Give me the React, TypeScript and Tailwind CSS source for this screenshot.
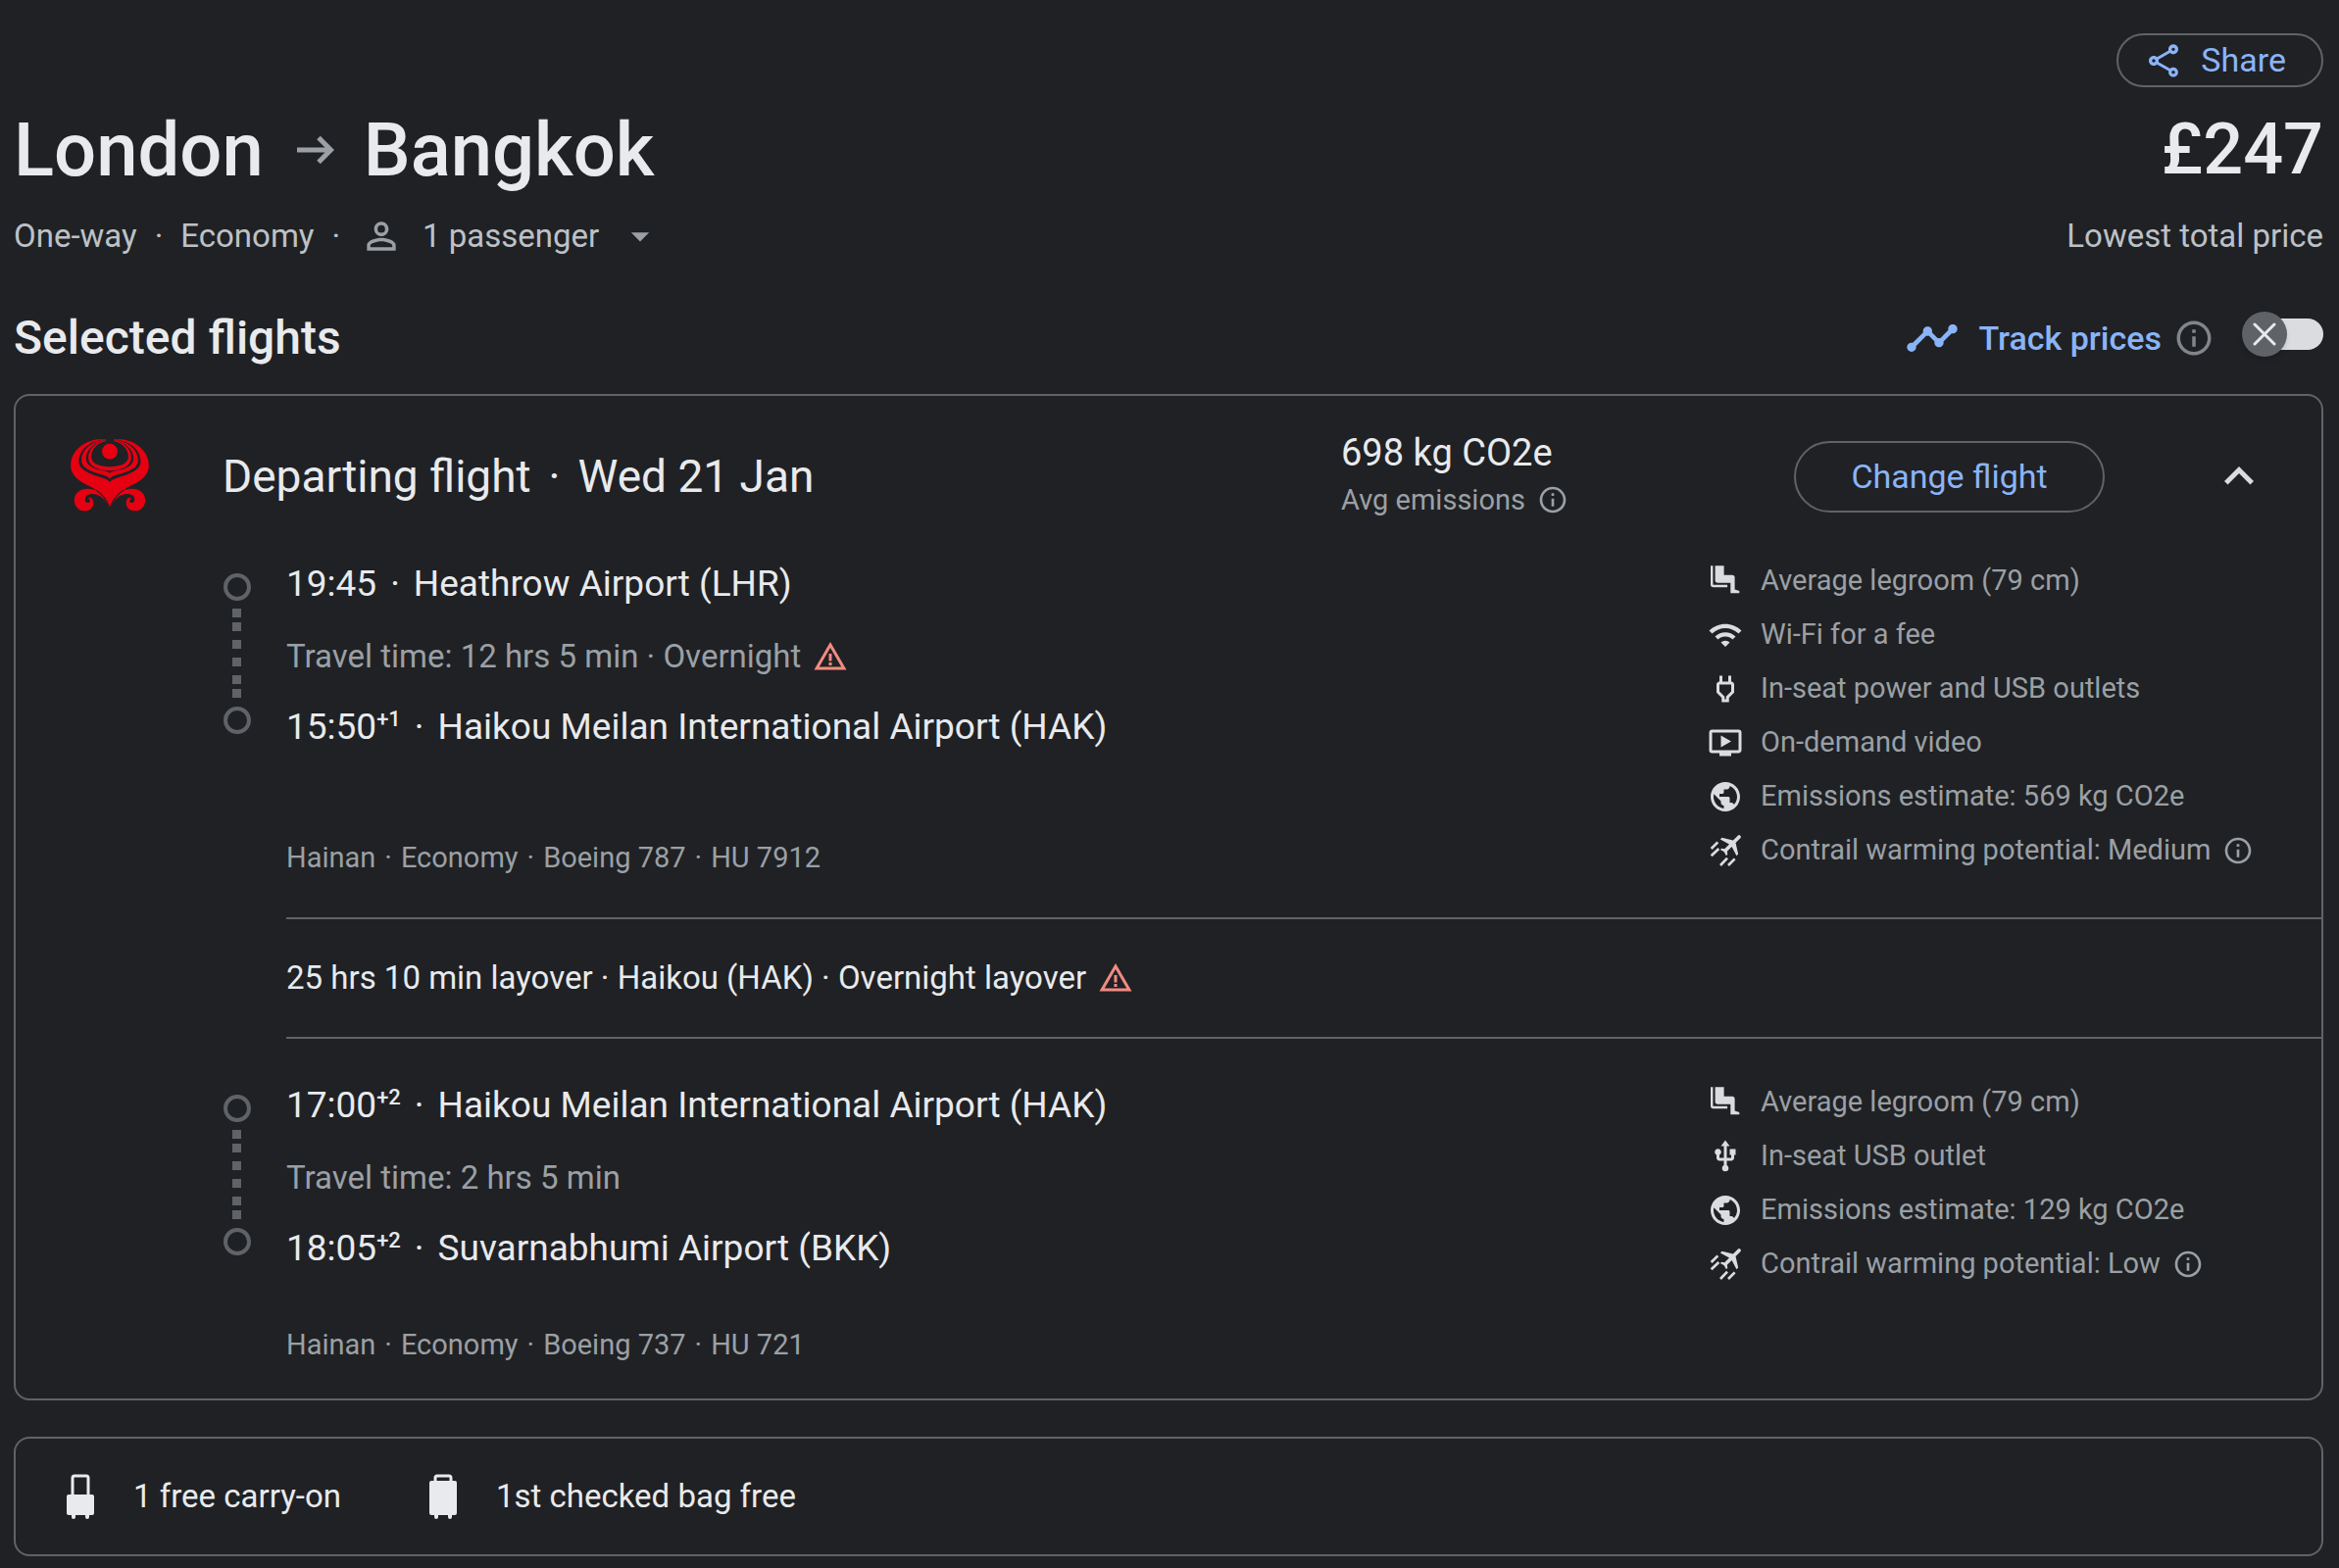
import { useState, type ReactNode } from 'react';
import {
  MdArrowDropDown,
  MdExpandLess,
  MdInfoOutline,
  MdOndemandVideo,
  MdOutlinePower,
  MdOutlineShare,
  MdPersonOutline,
  MdPublic,
  MdTimeline,
  MdUsb,
  MdWarningAmber,
  MdWifi
} from 'react-icons/md';

interface Amenity {
  icon: ReactNode;
  label: string;
  info?: boolean;
}

interface Stop {
  time: string;
  dayOffset?: string;
  airport: string;
}

interface Leg {
  from: Stop;
  to: Stop;
  travelTime: string;
  overnight?: boolean;
  details: string[];
  amenities: Amenity[];
}

const LEGS: Leg[] = [
  {
    from: { time: '19:45', airport: 'Heathrow Airport (LHR)' },
    to: { time: '15:50', dayOffset: '+1', airport: 'Haikou Meilan International Airport (HAK)' },
    travelTime: 'Travel time: 12 hrs 5 min · Overnight',
    overnight: true,
    details: ['Hainan', 'Economy', 'Boeing 787', 'HU 7912'],
    amenities: [
      { icon: <LegroomIcon />, label: 'Average legroom (79 cm)' },
      { icon: <MdWifi />, label: 'Wi-Fi for a fee' },
      { icon: <MdOutlinePower />, label: 'In-seat power and USB outlets' },
      { icon: <MdOndemandVideo />, label: 'On-demand video' },
      { icon: <MdPublic />, label: 'Emissions estimate: 569 kg CO2e' },
      { icon: <ContrailIcon />, label: 'Contrail warming potential: Medium', info: true }
    ]
  },
  {
    from: { time: '17:00', dayOffset: '+2', airport: 'Haikou Meilan International Airport (HAK)' },
    to: { time: '18:05', dayOffset: '+2', airport: 'Suvarnabhumi Airport (BKK)' },
    travelTime: 'Travel time: 2 hrs 5 min',
    details: ['Hainan', 'Economy', 'Boeing 737', 'HU 721'],
    amenities: [
      { icon: <LegroomIcon />, label: 'Average legroom (79 cm)' },
      { icon: <MdUsb />, label: 'In-seat USB outlet' },
      { icon: <MdPublic />, label: 'Emissions estimate: 129 kg CO2e' },
      { icon: <ContrailIcon />, label: 'Contrail warming potential: Low', info: true }
    ]
  }
];

function LegroomIcon() {
  return (
    <svg viewBox="0 0 36 36" width="1em" height="1em" fill="currentColor" aria-hidden="true">
      <path d="M3 2.3h2.4v19.4h14.7v2.6H5.8A2.8 2.8 0 0 1 3 21.5z" />
      <path d="M7.6 2.3h9v9.5H25a2.6 2.6 0 0 1 2.6 2.6v12l4.7 1.6v2.3h-9V19.7h-13A2.7 2.7 0 0 1 7.6 17z" />
    </svg>
  );
}

function ContrailIcon() {
  return (
    <svg viewBox="-8 -8 108 108" width="1em" height="1em" fill="currentColor" aria-hidden="true">
      <path
        transform="translate(92 0) rotate(45) scale(3.7) translate(-11.5 -2)"
        d="M21 16v-2l-8-5V3.5c0-.83-.67-1.5-1.5-1.5S10 2.67 10 3.5V9l-8 5v2l8-2.5V19l-2 1.5V22l3.5-1 3.5 1v-1.5L13 19v-5.5l8 2.5z"
      />
      <path d="M3 40l20-20M3 62l23-22M31 91l21-22M55 91l20-20" stroke="currentColor" strokeWidth="8" />
    </svg>
  );
}

function ArrowIcon() {
  return (
    <svg viewBox="0 0 38 28" className="h-7 w-[38px] text-[#9aa0a6]" fill="none" stroke="currentColor" strokeWidth="5" aria-hidden="true">
      <path d="M0 14h34M22 1.500l12.500 12.500L22 26.500" />
    </svg>
  );
}

function HainanLogo() {
  return (
    <svg viewBox="36 50 240 226" className="mb-1 h-[75px] w-20 shrink-0" role="img" aria-label="Hainan Airlines">
      <g fill="#e60012">
        <path d="M142 53C80 50 36 88 36 134c0 36 34 52 66 68 30 15 46 34 54 62 8-28 24-47 54-62 32-16 66-32 66-68C276 88 232 50 170 53z" />
        <path d="M154 264c-10-24-28-42-52-42-14 0-24 8-22 20 2 9 13 9 15 2 1-5-2-9-6-9 7-5 17 2 17 14 0 14-11 25-27 25-18 0-32-14-32-33 0-20 16-35 42-35 32 0 54 26 65 58z" />
        <path d="M158 264c10-24 28-42 52-42 14 0 24 8 22 20-2 9-13 9-15 2-1-5 2-9 6-9-7-5-17 2-17 14 0 14 11 25 27 25 18 0 32-14 32-33 0-20-16-35-42-35-32 0-54 26-65 58z" />
      </g>
      {/* rings are stacked from the outside in, dark gaps between the red bands */}
      <path fill="#202124" d="M148 53C98 56 61 84 61 122c0 30 44 40 74 51q15 5 21 12 6-7 21-12c30-11 74-21 74-51 0-38-37-66-87-69z" />
      <path fill="#e60012" d="M146 54C102 58 69 86 69 118c0 28 40 38 68 46q14 4 19 11 5-7 19-11c28-8 68-18 68-46 0-32-33-60-77-64z" />
      <path fill="#202124" d="M148 55c-38 4-65 30-65 58 0 24 32 34 57 38q12 2 16 7 4-5 16-7c25-4 57-14 57-38 0-28-27-54-65-58z" />
      <path fill="#e60012" d="M147 56c-34 4-57 28-57 54s30 40 66 40 66-14 66-40-23-50-57-54z" />
      <path fill="#202124" d="M144 48v12c-28 4-45 26-45 47 0 20 24 31 57 31s57-11 57-31c0-21-17-43-45-47V48z" />
      <path fill="none" stroke="#202124" strokeWidth="3" d="M118 213c16 12 28 28 36 48M194 213c-16 12-28 28-36 48" />
      <circle cx="156" cy="91" r="24" fill="#e60012" />
    </svg>
  );
}

function RouteMarker() {
  return (
    <svg viewBox="0 0 28 166" className="mt-[19px] h-[166px] w-7 shrink-0 text-[#5f6368]" fill="currentColor" aria-hidden="true">
      <circle cx="14" cy="15" r="12" fill="none" stroke="currentColor" strokeWidth="4" />
      <path d="M9 37h9v9H9zM9 51h9v9H9zM9 69h9v9H9zM9 87h9v9H9zM9 105h9v9H9zM9 119h9v9H9z" />
      <circle cx="14" cy="151" r="12" fill="none" stroke="currentColor" strokeWidth="4" />
    </svg>
  );
}

function CarryOnIcon() {
  return (
    <svg viewBox="0 0 28 46" className="h-[46px] w-7" fill="currentColor" aria-hidden="true">
      <path d="M6 22V4a2 2 0 0 1 2-2h12a2 2 0 0 1 2 2v18" fill="none" stroke="currentColor" strokeWidth="3" />
      <rect y="21" width="28" height="21" rx="2" />
      <path d="M5 42h4v2a2 2 0 0 1-4 0zM19 42h4v2a2 2 0 0 1-4 0z" />
    </svg>
  );
}

function CheckedBagIcon() {
  return (
    <svg viewBox="0 0 28 46" className="h-[46px] w-7" fill="currentColor" aria-hidden="true">
      <path d="M6 8V4a2 2 0 0 1 2-2h12a2 2 0 0 1 2 2v4" fill="none" stroke="currentColor" strokeWidth="3" />
      <rect y="7" width="28" height="35" rx="2" />
      <path d="M5 42h4v2a2 2 0 0 1-4 0zM19 42h4v2a2 2 0 0 1-4 0z" />
    </svg>
  );
}

function StopRow({ stop }: { stop: Stop }) {
  return (
    <div className="flex text-[37px] leading-12 text-[#e8eaed]">
      <span>{stop.time}</span>
      {stop.dayOffset && <span className="text-[22px] leading-8 font-medium">{stop.dayOffset}</span>}
      <span className="px-[14px]">·</span>
      <span>{stop.airport}</span>
    </div>
  );
}

function LegSection({ leg }: { leg: Leg }) {
  return (
    <div className="flex pl-[212px]">
      <RouteMarker />
      <div className="ml-9 flex flex-1 flex-col pt-[7px]">
        <StopRow stop={leg.from} />
        <div className="mt-[30px] mb-7 flex items-center gap-3 text-[33px] leading-10 text-[#9aa0a6]">
          <span>{leg.travelTime}</span>
          {leg.overnight && <MdWarningAmber className="size-9 text-[#f28b82]" />}
        </div>
        <StopRow stop={leg.to} />
        <p className="mt-auto flex pt-[54px] text-[29px] leading-10 text-[#9aa0a6]">
          {leg.details.map((detail, index) => (
            <span key={detail}>
              {index > 0 && <span className="px-[9px]">·</span>}
              {detail}
            </span>
          ))}
        </p>
      </div>
      <ul className="w-[626px] shrink-0">
        {leg.amenities.map((amenity) => (
          <li key={amenity.label} className="flex h-[55px] items-center text-[29px] text-[#9aa0a6]">
            <span className="mr-[18px] text-4xl text-[#dadce0]">{amenity.icon}</span>
            <span>{amenity.label}</span>
            {amenity.info && <MdInfoOutline className="ml-3 size-8" />}
          </li>
        ))}
      </ul>
    </div>
  );
}

function TrackToggle() {
  const [tracking, setTracking] = useState(false);

  return (
    <span className="relative flex h-[46px] w-[83px] items-center">
      <input
        id="track-prices"
        type="checkbox"
        role="switch"
        checked={tracking}
        onChange={(event) => setTracking(event.target.checked)}
        className="ml-1 h-8 w-full cursor-pointer appearance-none rounded-full bg-[#dadce0] checked:bg-[#8ab4f8]"
      />
      <span
        className={
          tracking
            ? 'pointer-events-none absolute right-0 flex size-[46px] items-center justify-center rounded-full bg-[#5f6368] shadow-md'
            : 'pointer-events-none absolute left-0 flex size-[46px] items-center justify-center rounded-full bg-[#5f6368] shadow-md'
        }
      >
        <svg viewBox="0 0 24 24" className="size-6" fill="none" stroke="#e8eaed" strokeWidth="3" strokeLinecap="round">
          <path d="M2 2l20 20M22 2L2 22" />
        </svg>
      </span>
    </span>
  );
}

export default function App() {
  return (
    <main className="min-h-screen bg-[#202124] pt-[34px] pr-4 pb-2 pl-[14px] font-['Roboto',sans-serif] text-[#e8eaed]">
      <div className="flex justify-end">
        <button
          type="button"
          className="flex h-[55px] items-center gap-[18px] rounded-full border-2 border-[#5f6368] pr-9 pl-[26px] text-[34px] text-[#8ab4f8]"
        >
          <MdOutlineShare className="size-10" />
          Share
        </button>
      </div>

      <div className="mt-6 flex items-center justify-between leading-20 font-medium">
        <h1 className="flex items-center text-[76px]">
          London
          <span className="mr-[30px] ml-[34px]">
            <ArrowIcon />
          </span>
          Bangkok
        </h1>
        <p className="text-[72px]">£247</p>
      </div>

      <div className="mt-[26px] flex items-center justify-between text-[33px] leading-10 text-[#bdc1c6]">
        <div className="flex items-center">
          <span>One-way</span>
          <span className="px-[18px]">·</span>
          <span>Economy</span>
          <span className="px-[18px]">·</span>
          <button type="button" className="flex items-center">
            <MdPersonOutline className="ml-0.5 size-11 text-[#9aa0a6]" />
            <span className="ml-5">1 passenger</span>
            <MdArrowDropDown className="ml-5 size-11 text-[#9aa0a6]" />
          </button>
        </div>
        <p>Lowest total price</p>
      </div>

      <div className="mt-[54px] flex items-center justify-between">
        <h2 className="text-[48px] leading-14 font-medium">Selected flights</h2>
        <div className="flex items-center">
          <label htmlFor="track-prices" className="flex items-center text-[34px] font-medium text-[#8ab4f8]">
            <MdTimeline className="mr-5 size-14" />
            Track prices
          </label>
          <button type="button" aria-label="About price tracking" className="ml-3 text-[#80868b]">
            <MdInfoOutline className="size-[42px]" />
          </button>
          <span className="mb-2 ml-7">
            <TrackToggle />
          </span>
        </div>
      </div>

      <section className="mt-[29px] rounded-2xl border-2 border-[#5f6368] pt-9 pb-[35px]">
        <div className="flex h-[92px] items-center pr-[54px] pl-14">
          <HainanLogo />
          <h3 className="ml-[75px] flex flex-1 gap-[18px] text-[46px]">
            <span>Departing flight</span>
            <span>·</span>
            <span>Wed 21 Jan</span>
          </h3>
          <div className="w-[462px] pb-1">
            <p className="text-[38px] leading-12">698 kg CO2e</p>
            <p className="flex items-center gap-3 pt-1 text-[29px] leading-10 text-[#9aa0a6]">
              Avg emissions
              <MdInfoOutline className="size-8" />
            </p>
          </div>
          <button
            type="button"
            className="h-[73px] w-[317px] rounded-full border-2 border-[#5f6368] text-[34px] text-[#8ab4f8]"
          >
            Change flight
          </button>
          <button type="button" aria-label="Collapse" className="ml-[107px] flex size-[60px] items-center justify-center text-[#dadce0]">
            <MdExpandLess className="size-[60px]" />
          </button>
        </div>

        <div className="mt-[33px]">
          <LegSection leg={LEGS[0]} />
        </div>

        <div className="mt-[41px] mb-[37px] ml-[276px] flex items-center gap-3 border-y-2 border-[#5f6368] py-10 text-[33px] leading-10">
          <span>25 hrs 10 min layover · Haikou (HAK) · Overnight layover</span>
          <MdWarningAmber className="size-9 text-[#f28b82]" />
        </div>

        <LegSection leg={LEGS[1]} />
      </section>

      <section className="mt-[37px] flex items-center rounded-2xl border-2 border-[#5f6368] py-[39px] pl-[52px] text-[33px] leading-10">
        <div className="flex h-10 items-center gap-10">
          <CarryOnIcon />
          <span>1 free carry-on</span>
        </div>
        <div className="ml-[90px] flex h-10 items-center gap-10">
          <CheckedBagIcon />
          <span>1st checked bag free</span>
        </div>
      </section>
    </main>
  );
}
